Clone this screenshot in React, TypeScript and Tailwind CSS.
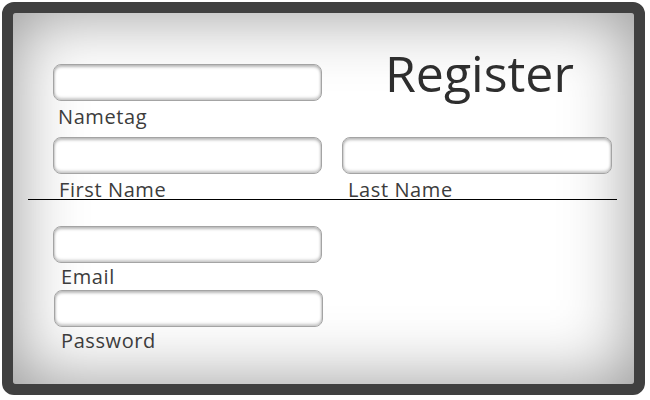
import React from "react";

const font = { fontFamily: '"Open Sans", "Noto Sans", sans-serif' };

const inputCls =
  "h-[37px] rounded-[8px] border border-[#a4a4a4] bg-white shadow-[inset_0_2px_3px_rgba(0,0,0,0.28),inset_0_-2px_3px_rgba(0,0,0,0.22)]";
const labelCls = "text-[20px] leading-[24px] tracking-[0.6px] text-[#3c3c3c]";

export default function App() {
  return (
    <div className="h-[400px] w-[650px] bg-white p-[2px]" style={font}>
      <div className="h-[393px] w-[643px] rounded-[12px] border-[11px] border-[#404040] bg-[#404040]">
        <div className="flex h-full w-full flex-col rounded-[3px] bg-white pt-[35px] shadow-[inset_0_0_70px_rgba(0,0,0,0.42)]">
          <div className="flex items-start pl-[40px]">
            <div className="mt-[16px] flex flex-col">
              <div className={`${inputCls} w-[269px]`} />
              <div className={`${labelCls} mt-[4px] ml-[5px]`}>Nametag</div>
            </div>
            <div className="ml-[63px] text-[50px] leading-[50px] text-[#2e2e2e]">Register</div>
          </div>
          <div className="mt-[8px] flex pl-[40px]">
            <div className="flex flex-col">
              <div className={`${inputCls} w-[269px]`} />
              <div className={`${labelCls} mt-[4px] ml-[6px]`}>First Name</div>
            </div>
            <div className="ml-[20px] flex flex-col">
              <div className={`${inputCls} w-[270px]`} />
              <div className={`${labelCls} mt-[4px] ml-[6px]`}>Last Name</div>
            </div>
          </div>
          <div className="-mt-[3px] ml-[15px] h-px w-[589px] bg-black" />
          <div className="mt-[26px] flex flex-col pl-[40px]">
            <div className={`${inputCls} w-[269px]`} />
            <div className={`${labelCls} mt-[2px] ml-[8px]`}>Email</div>
            <div className={`${inputCls} mt-[1px] ml-[1px] w-[269px]`} />
            <div className={`${labelCls} mt-[2px] ml-[8px]`}>Password</div>
          </div>
        </div>
      </div>
    </div>
  );
}
